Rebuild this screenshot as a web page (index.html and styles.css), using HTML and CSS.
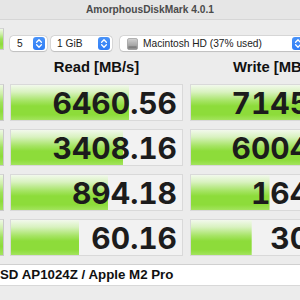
FILE: index.html
```html
<!DOCTYPE html>
<html>
<head>
<meta charset="utf-8">
<link rel="stylesheet" href="styles.css">
</head>
<body>
<div class="window">
  <div class="titlebar">AmorphousDiskMark 4.0.1</div>
  <div class="toolbar">
    <div class="side-btn all"></div>
    <div class="selects">
      <div class="select s-count"><span class="label">5</span><span class="stepper"><svg width="12" height="13" viewBox="0 0 12 13"><path d="M3.6 5.2 L6 2.8 L8.4 5.2 M3.6 7.8 L6 10.2 L8.4 7.8" fill="none" stroke="#fff" stroke-width="1.3" stroke-linecap="round" stroke-linejoin="round"/></svg></span></div>
      <div class="select s-size"><span class="label">1 GiB</span><span class="stepper"><svg width="12" height="13" viewBox="0 0 12 13"><path d="M3.6 5.2 L6 2.8 L8.4 5.2 M3.6 7.8 L6 10.2 L8.4 7.8" fill="none" stroke="#fff" stroke-width="1.3" stroke-linecap="round" stroke-linejoin="round"/></svg></span></div>
      <div class="select s-disk"><svg class="disk" width="11" height="12" viewBox="0 0 11 12"><defs><linearGradient id="dg" x1="0" y1="0" x2="0" y2="1"><stop offset="0" stop-color="#d4d4d4"/><stop offset="0.6" stop-color="#a9a9a9"/><stop offset="1" stop-color="#8a8a8a"/></linearGradient></defs><rect x="0.5" y="0.5" width="10" height="11" rx="1.5" fill="url(#dg)" stroke="#8c8c8c" stroke-width="0.6"/><rect x="1.5" y="8.3" width="8" height="1.6" fill="#7d7d7d"/><line x1="2" y1="3" x2="9" y2="3" stroke="#bdbdbd" stroke-width="0.5"/><line x1="2" y1="5" x2="9" y2="5" stroke="#b0b0b0" stroke-width="0.5"/></svg><span class="label">Macintosh HD (37% used)</span><span class="stepper"><svg width="12" height="13" viewBox="0 0 12 13"><path d="M3.6 5.2 L6 2.8 L8.4 5.2 M3.6 7.8 L6 10.2 L8.4 7.8" fill="none" stroke="#fff" stroke-width="1.3" stroke-linecap="round" stroke-linejoin="round"/></svg></span></div>
    </div>
  </div>
  <div class="grid">
    <div class="side-gap"></div>
    <div class="col-title">Read [MB/s]</div>
    <div class="col-title write">Write [MB/s]</div>

    <div class="side-btn"></div>
    <div class="cell" style="--p:69%"><span class="val">6460.56</span></div>
    <div class="cell write" style="--p:69.6%"><span class="val">7145.28</span></div>

    <div class="side-btn"></div>
    <div class="cell" style="--p:65.5%"><span class="val">3408.16</span></div>
    <div class="cell write" style="--p:68.5%"><span class="val">6004.87</span></div>

    <div class="side-btn"></div>
    <div class="cell" style="--p:56.7%"><span class="val">894.18</span></div>
    <div class="cell write" style="--p:46.2%"><span class="val">164.37</span></div>

    <div class="side-btn"></div>
    <div class="cell" style="--p:39.8%"><span class="val">60.16</span></div>
    <div class="cell write" style="--p:35.7%"><span class="val">30.12</span></div>
  </div>
  <div class="footer">
    <div class="info">SD AP1024Z / Apple M2 Pro</div>
  </div>
</div>
</body>
</html>
```

FILE: styles.css
```css
html, body {
  margin: 0;
  padding: 0;
}
body {
  background: #ececec;
  font-family: "Liberation Sans", Arial, sans-serif;
  overflow: hidden;
  width: 300px;
  height: 300px;
}
.window {
  width: 370px;
}
.titlebar {
  height: 19px;
  line-height: 19px;
  width: 300px;
  text-align: center;
  font-size: 10.2px;
  font-weight: 700;
  color: #4b4b4b;
  background: #e6e6e6;
  border-bottom: 1px solid #d6d6d6;
}
.toolbar {
  display: flex;
  gap: 6px;
  padding-top: 8px;
  box-sizing: border-box;
  height: 38px;
}
.side-btn {
  width: 4px;
  box-sizing: border-box;
  border-right: 1px solid #c9c9c9;
  border-top: 1px solid #d4d4d4;
  border-bottom: 1px solid #c9c9c9;
  background: linear-gradient(180deg, #eef8e4 0%, #cdefa8 25%, #9ee15a 50%, #8ddc3a 75%, #a3e45e 100%);
}
.side-btn.all {
  height: 22px;
}
.selects {
  display: flex;
  margin-top: 8px;
  height: 15px;
}
.select {
  display: flex;
  align-items: center;
  height: 15px;
  box-sizing: border-box;
  background: #fff;
  border-radius: 3.5px;
  box-shadow: 0 0 0 0.5px rgba(0, 0, 0, 0.16), 0 0.5px 1px rgba(0, 0, 0, 0.12);
  font-size: 10.2px;
  color: #222;
}
.select .label {
  flex: 1;
  white-space: nowrap;
}
.stepper {
  width: 12px;
  height: 13px;
  margin-right: 2px;
  border-radius: 3px;
  background: linear-gradient(180deg, #4a93f8 0%, #2f7df6 100%);
  display: flex;
}
.s-count {
  width: 37px;
  padding-left: 7px;
  margin-right: 4px;
}
.s-size {
  width: 61px;
  padding-left: 6px;
  margin-right: 8px;
}
.s-disk {
  width: 186px;
  padding-left: 7px;
}
.disk {
  margin-right: 5px;
  flex: none;
}
.grid {
  display: grid;
  grid-template-columns: 4px 173px 173px;
  grid-template-rows: 18px repeat(4, 37px);
  column-gap: 6px;
  row-gap: 8px;
}
.grid > .write {
  margin-left: 1px;
}
.col-title {
  font-size: 14.8px;
  font-weight: 700;
  color: #111;
  text-align: center;
  line-height: 18px;
  align-self: start;
  margin-bottom: -2px;
}
.cell {
  box-sizing: border-box;
  border: 1px solid #d9d9d9;
  background: linear-gradient(180deg, #f2f9ec 0%, #d9f2c0 20%, #a6e465 45%, #8ddc3a 60%, #8ddc3a 85%, #a3e45e 100%) no-repeat left top / var(--p) 100%, #f2f2f2;
  display: flex;
  align-items: center;
  justify-content: flex-end;
  padding-right: 5px;
}
.val {
  font-family: Inter, "Liberation Sans", sans-serif;
  font-weight: 700;
  font-size: 30px;
  font-variant-numeric: tabular-nums;
  color: #1c1c1c;
  line-height: 1;
}
.footer {
  margin-top: 8px;
  width: 300px;
}
.info {
  height: 22px;
  box-sizing: border-box;
  background: #fff;
  border-top: 1px solid #d0d0d0;
  border-bottom: 1px solid #d8d8d8;
  font-size: 13.3px;
  font-weight: 700;
  color: #111;
  line-height: 20px;
  white-space: nowrap;
}
```
